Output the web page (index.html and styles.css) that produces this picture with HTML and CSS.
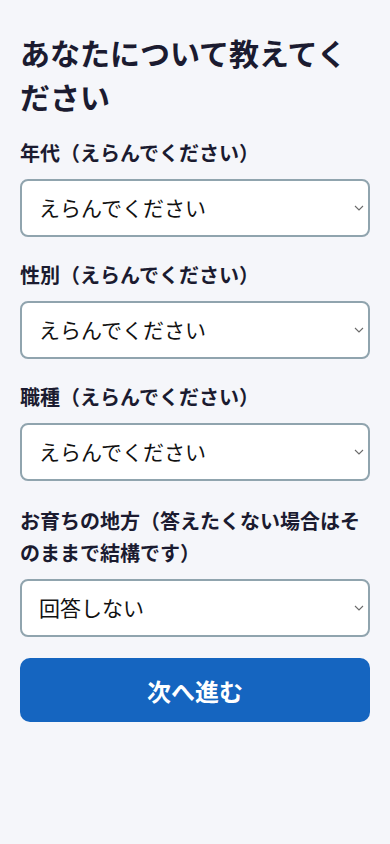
FILE: index.html
```html
<!DOCTYPE html>
<html lang="ja">
<head>
<meta charset="utf-8">
<meta name="viewport" content="width=device-width, initial-scale=1">
<title>あなたについて教えてください</title>
<link rel="stylesheet" href="styles.css">
</head>
<body>
<main class="page">
  <h1 class="title">あなたについて教えてください</h1>
  <form class="form">
    <div class="field">
      <label class="label" for="age">年代（えらんでください）</label>
      <div class="select-wrap">
        <select id="age" class="select"><option>えらんでください</option></select>
        <svg class="chevron" viewBox="0 0 10 6" width="10" height="6"><path d="M1 1l4 4 4-4" fill="none" stroke="#6b6b6b" stroke-width="1.1"/></svg>
      </div>
    </div>
    <div class="field">
      <label class="label" for="gender">性別（えらんでください）</label>
      <div class="select-wrap">
        <select id="gender" class="select"><option>えらんでください</option></select>
        <svg class="chevron" viewBox="0 0 10 6" width="10" height="6"><path d="M1 1l4 4 4-4" fill="none" stroke="#6b6b6b" stroke-width="1.1"/></svg>
      </div>
    </div>
    <div class="field">
      <label class="label" for="job">職種（えらんでください）</label>
      <div class="select-wrap">
        <select id="job" class="select"><option>えらんでください</option></select>
        <svg class="chevron" viewBox="0 0 10 6" width="10" height="6"><path d="M1 1l4 4 4-4" fill="none" stroke="#6b6b6b" stroke-width="1.1"/></svg>
      </div>
    </div>
    <div class="field field-last">
      <label class="label" for="region">お育ちの地方（答えたくない場合はそのままで結構です）</label>
      <div class="select-wrap">
        <select id="region" class="select"><option>回答しない</option></select>
        <svg class="chevron" viewBox="0 0 10 6" width="10" height="6"><path d="M1 1l4 4 4-4" fill="none" stroke="#6b6b6b" stroke-width="1.1"/></svg>
      </div>
    </div>
    <button type="button" class="next">次へ進む</button>
  </form>
</main>
</body>
</html>
```

FILE: styles.css
```css
* { box-sizing: border-box; }
html, body {
  margin: 0;
  padding: 0;
  background: #f5f6fa;
}
body {
  font-family: "Noto Sans CJK JP", "Noto Sans", sans-serif;
  color: #1b1b30;
}
.page {
  padding: 30px 20px 40px;
}
.title {
  margin: 0 0 19px;
  font-size: 30px;
  line-height: 44px;
  font-weight: 700;
  color: #1b1b30;
}
.form {
  display: flex;
  flex-direction: column;
}
.field {
  display: flex;
  flex-direction: column;
  margin-bottom: 22px;
}
.field-last {
  margin-top: 2px;
  margin-bottom: 21px;
}
.label {
  font-size: 20px;
  line-height: 32px;
  font-weight: 700;
  margin-bottom: 10px;
  color: #1b1b30;
}
.select-wrap {
  position: relative;
}
.select {
  appearance: none;
  -webkit-appearance: none;
  width: 100%;
  height: 58px;
  border: 2px solid #90a4ae;
  border-radius: 8px;
  background: #ffffff;
  padding: 0 30px 3px 17px;
  font-family: "Noto Sans CJK JP", "Noto Sans", sans-serif;
  font-size: 21px;
  color: #111111;
  margin: 0;
}
.chevron {
  position: absolute;
  right: 6px;
  top: 26px;
  pointer-events: none;
}
.next {
  height: 64px;
  width: 100%;
  border: none;
  border-radius: 10px;
  background: #1565c0;
  color: #ffffff;
  font-family: "Noto Sans CJK JP", "Noto Sans", sans-serif;
  font-size: 24px;
  font-weight: 700;
}
```
